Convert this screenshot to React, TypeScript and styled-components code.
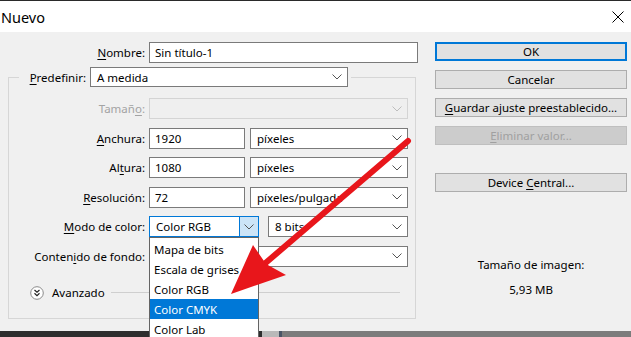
import React from "react";
import styled, { createGlobalStyle, css } from "styled-components";

// styles

const GlobalStyle = createGlobalStyle`
  html, body {
    margin: 0;
    padding: 0;
    background: #f0f0f0;
  }
  body {
    font-family: "Noto Sans", "Liberation Sans", sans-serif;
    font-size: 11.5px;
    color: #000;
  }
  * {
    box-sizing: border-box;
  }
`;

const Window = styled.div`
  position: relative;
  width: 631px;
  height: 337px;
  overflow: hidden;
  display: flex;
  flex-direction: column;
  background: #f0f0f0;
`;

const TitleBar = styled.div`
  flex: none;
  height: 32px;
  background: #fff;
  border-top: 1px solid #2a2a2a;
  display: flex;
  align-items: center;
  justify-content: space-between;
  padding: 0 7px 0 1px;
`;

const Title = styled.div`
  font-size: 14.5px;
  line-height: 20px;
`;

const Body = styled.div`
  flex: 1;
  display: flex;
  padding-top: 10px;
`;

const LeftPane = styled.div`
  width: 420px;
  flex: none;
  display: flex;
  flex-direction: column;
`;

const RightPane = styled.div`
  width: 192px;
  margin-left: 15px;
  display: flex;
  flex-direction: column;
`;

const FormRow = styled.div`
  display: flex;
  align-items: center;
  gap: 4px;
  height: 21px;
`;

const Label = styled.div<{ $width: number; $disabled?: boolean }>`
  flex: none;
  width: ${(p) => p.$width}px;
  text-align: right;
  white-space: nowrap;
  color: ${(p) => (p.$disabled ? "#a3a3a3" : "#000")};
`;

const Key = styled.span`
  text-decoration: underline;
  text-underline-offset: 2px;
`;

const TextBox = styled.div<{ $width: number }>`
  flex: none;
  width: ${(p) => p.$width}px;
  height: 21px;
  background: #fff;
  border: 1px solid #7a7a7a;
  padding: 0 5px;
  display: flex;
  align-items: center;
  white-space: nowrap;
`;

const SelectBox = styled.div<{ $width: number; $disabled?: boolean; $height?: number; $offset?: number }>`
  flex: none;
  width: ${(p) => p.$width}px;
  height: ${(p) => p.$height ?? 21}px;
  margin-left: ${(p) => p.$offset ?? 0}px;
  background: #fff;
  border: 1px solid #7a7a7a;
  padding: 0 5px 0 6px;
  display: flex;
  align-items: center;
  justify-content: space-between;
  white-space: nowrap;
  color: #000;

  ${(p) =>
    p.$disabled &&
    css`
      background: #efefef;
      border-color: #d4d4d4;
    `}
`;

const FocusSelect = styled.div<{ $width: number }>`
  flex: none;
  width: ${(p) => p.$width}px;
  height: 21px;
  background: #fff;
  border: 1px solid #0078d7;
  display: flex;
  align-items: stretch;
`;

const FocusText = styled.div`
  flex: 1;
  padding-left: 6px;
  display: flex;
  align-items: center;
  white-space: nowrap;
`;

const FocusButton = styled.div`
  width: 19px;
  background: #cce4f7;
  border-left: 1px solid #0078d7;
  display: flex;
  align-items: center;
  justify-content: center;
`;

const Group = styled.fieldset`
  margin: 4px 0 0 8px;
  padding: 0 0 17px 0;
  width: 408px;
  min-width: 0;
  border: 1px solid #d6d6d6;
`;

const GroupLegend = styled.legend`
  margin-left: 10px;
  padding: 0 3px 0 9px;
  height: 20px;
  display: flex;
  align-items: center;
  gap: 4px;
`;

const Rows = styled.div`
  margin-top: 11px;
  display: flex;
  flex-direction: column;
  gap: 8.5px;
`;

const AdvancedRow = styled.div`
  margin-top: 18px;
  height: 16px;
  padding: 0 15px 0 21px;
  display: flex;
  align-items: center;
  gap: 8px;
`;

const Rule = styled.div`
  flex: 1;
  height: 1px;
  margin-left: -2px;
  background: #cfcfcf;
`;

const Button = styled.div<{ $primary?: boolean; $disabled?: boolean; $top: number }>`
  height: 19px;
  margin-top: ${(p) => p.$top}px;
  background: #e1e1e1;
  border: 1px solid #adadad;
  display: flex;
  align-items: center;
  justify-content: center;
  white-space: nowrap;

  ${(p) =>
    p.$primary &&
    css`
      border: 2px solid #0078d7;
    `}
  ${(p) =>
    p.$disabled &&
    css`
      background: #cccccc;
      border-color: #bfbfbf;
      color: #a0a0a0;
    `}
`;

const Info = styled.div`
  margin-top: 65px;
  display: flex;
  flex-direction: column;
  align-items: center;
  gap: 9px;
  line-height: 16px;
`;

const Desktop = styled.div`
  flex: none;
  height: 6px;
  display: flex;
`;

const DesktopPart = styled.div<{ $width?: number; $color: string }>`
  ${(p) => (p.$width ? `width: ${p.$width}px; flex: none;` : "flex: 1;")}
  background: ${(p) => p.$color};
`;

const DropList = styled.div`
  position: absolute;
  left: 149px;
  top: 237px;
  width: 110px;
  background: #fff;
  border: 1px solid #646464;
  border-bottom: none;
  padding-top: 1px;
  z-index: 2;
`;

const DropItem = styled.div<{ $active?: boolean }>`
  height: 20px;
  padding-left: 4px;
  display: flex;
  align-items: center;
  white-space: nowrap;
  ${(p) =>
    p.$active &&
    css`
      background: #0078d7;
      color: #fff;
    `}
`;

const Overlay = styled.svg`
  position: absolute;
  left: 0;
  top: 0;
  z-index: 3;
  pointer-events: none;
`;

// parts

const Chevron = ({ color = "#555" }: { color?: string }) => (
  <svg width="10" height="6" viewBox="0 0 10 6">
    <polyline points="0.5,0.5 5,5 9.5,0.5" fill="none" stroke={color} strokeWidth="1" />
  </svg>
);

const CloseIcon = () => (
  <svg width="12" height="12" viewBox="0 0 12 12">
    <path d="M0.5 0.5 L11.5 11.5 M11.5 0.5 L0.5 11.5" stroke="#000" strokeWidth="1" />
  </svg>
);

const ExpandIcon = () => (
  <svg width="14" height="14" viewBox="0 0 14 14">
    <circle cx="7" cy="7" r="6.3" fill="#fff" stroke="#8a8a8a" strokeWidth="1" />
    <polyline points="4.5,4 7,6.3 9.5,4" fill="none" stroke="#222" strokeWidth="1.2" />
    <polyline points="4.5,7.3 7,9.6 9.5,7.3" fill="none" stroke="#222" strokeWidth="1.2" />
  </svg>
);

const RedArrow = () => (
  <Overlay width="631" height="337" viewBox="0 0 631 337">
    <line x1="408" y1="141" x2="262" y2="266" stroke="#e8161b" strokeWidth="6" strokeLinecap="round" />
    <polygon points="231,294 286,275 266,264 253,245" fill="#e8161b" />
  </Overlay>
);

const colorModes = ["Mapa de bits", "Escala de grises", "Color RGB", "Color CMYK", "Color Lab"];

// main app

export default function App() {
  return (
    <>
      <GlobalStyle />
      <Window>
        <TitleBar>
          <Title>Nuevo</Title>
          <CloseIcon />
        </TitleBar>

        <Body>
          <LeftPane>
            <FormRow>
              <Label $width={145}>
                <Key>N</Key>ombre:
              </Label>
              <TextBox $width={269}>Sin título-1</TextBox>
            </FormRow>

            <Group>
              <GroupLegend>
                <Label $width={58}>
                  <Key>P</Key>redefinir:
                </Label>
                <SelectBox $width={258} $height={20}>
                  A medida
                  <Chevron />
                </SelectBox>
              </GroupLegend>

              <Rows>
                <FormRow>
                  <Label $width={136} $disabled>
                    Tamañ<Key>o</Key>:
                  </Label>
                  <SelectBox $width={259} $disabled>
                    <span />
                    <Chevron color="#bdbdbd" />
                  </SelectBox>
                </FormRow>
                <FormRow>
                  <Label $width={136}>
                    <Key>A</Key>nchura:
                  </Label>
                  <TextBox $width={96}>1920</TextBox>
                  <SelectBox $width={158} $offset={1}>
                    píxeles
                    <Chevron />
                  </SelectBox>
                </FormRow>
                <FormRow>
                  <Label $width={136}>
                    Al<Key>t</Key>ura:
                  </Label>
                  <TextBox $width={96}>1080</TextBox>
                  <SelectBox $width={158} $offset={1}>
                    píxeles
                    <Chevron />
                  </SelectBox>
                </FormRow>
                <FormRow>
                  <Label $width={136}>
                    <Key>R</Key>esolución:
                  </Label>
                  <TextBox $width={96}>72</TextBox>
                  <SelectBox $width={158} $offset={1}>
                    píxeles/pulgada
                    <Chevron />
                  </SelectBox>
                </FormRow>
                <FormRow>
                  <Label $width={136}>
                    <Key>M</Key>odo de color:
                  </Label>
                  <FocusSelect $width={110}>
                    <FocusText>Color RGB</FocusText>
                    <FocusButton>
                      <Chevron />
                    </FocusButton>
                  </FocusSelect>
                  <SelectBox $width={140} $offset={5}>
                    8 bits
                    <Chevron />
                  </SelectBox>
                </FormRow>
                <FormRow>
                  <Label $width={136}>
                    Conten<Key>i</Key>do de fondo:
                  </Label>
                  <SelectBox $width={259}>
                    <span />
                    <Chevron />
                  </SelectBox>
                </FormRow>
              </Rows>

              <AdvancedRow>
                <ExpandIcon />
                <span>Avanzado</span>
                <Rule />
              </AdvancedRow>
            </Group>
          </LeftPane>

          <RightPane>
            <Button $primary $top={0}>
              <span>OK</span>
            </Button>
            <Button $top={9}>
              <span>Cancelar</span>
            </Button>
            <Button $top={9}>
              <span>
                <Key>G</Key>uardar ajuste preestablecido...
              </span>
            </Button>
            <Button $top={9} $disabled>
              <span>
                <Key>E</Key>liminar valor...
              </span>
            </Button>
            <Button $top={28}>
              <span>
                Device <Key>C</Key>entral...
              </span>
            </Button>
            <Info>
              <span>Tamaño de imagen:</span>
              <span>5,93 MB</span>
            </Info>
          </RightPane>
        </Body>

        <Desktop>
          <DesktopPart $width={262} $color="#2e2e2e" />
          <DesktopPart $width={17} $color="#b9b9b9" />
          <DesktopPart $width={3} $color="#4a5566" />
          <DesktopPart $color="#7c7c7c" />
        </Desktop>

        <DropList>
          {colorModes.map((mode) => (
            <DropItem key={mode} $active={mode === "Color CMYK"}>
              {mode}
            </DropItem>
          ))}
        </DropList>

        <RedArrow />
      </Window>
    </>
  );
}
